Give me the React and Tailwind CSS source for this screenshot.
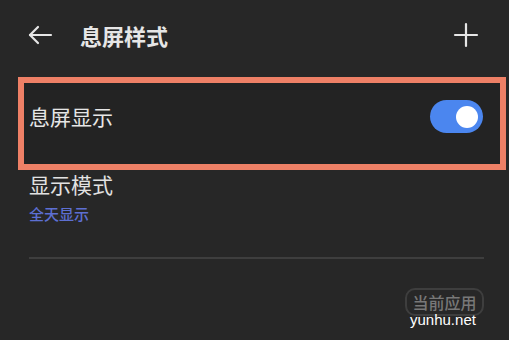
export default function App() {
  return (
    <div className="w-[509px] h-[340px] bg-[#272727] overflow-hidden relative" style={{ fontFamily: '"Noto Sans CJK SC", "Noto Sans", sans-serif' }}>
      <div className="h-[77px] flex items-center pl-[27px] pr-[30px] pb-[8px]">
        <svg width="26" height="22" viewBox="0 0 26 22" fill="none" stroke="#e6e6e6" strokeWidth="2.2" strokeLinecap="round" strokeLinejoin="round">
          <path d="M24 11H3" />
          <path d="M11 3L3 11L11 19" />
        </svg>
        <div className="ml-[27px] text-[22px] font-bold text-[#e6e6e6] leading-none">息屏样式</div>
        <div className="flex-1" />
        <svg width="26" height="26" viewBox="0 0 26 26" fill="none" stroke="#e6e6e6" strokeWidth="2.2" strokeLinecap="round">
          <path d="M13 2V24" />
          <path d="M2 13H24" />
        </svg>
      </div>
      <div className="ml-[18px] w-[488px] h-[93px] border-[6px] border-[#ee8066] bg-[#232323] flex items-center pl-[5px] pr-[17px] pb-[14px]">
        <div className="text-[21px] text-[#e6e6e6] leading-none">息屏显示</div>
        <div className="flex-1" />
        <div className="w-[53px] h-[33px] rounded-full bg-[#4b86ef] flex items-center justify-end pr-[5px]">
          <div className="w-[22px] h-[22px] rounded-full bg-white" />
        </div>
      </div>
      <div className="pl-[29px] pr-[25px]">
        <div className="mt-[4px] text-[21px] text-[#e2e2e2] leading-none">显示模式</div>
        <div className="mt-[11px] text-[15px] text-[#5d6fd2] leading-none font-medium">全天显示</div>
        <div className="mt-[36px] h-[2px] bg-[#3e3e3e]" />
        <div className="mt-[29px] flex justify-end">
          <div className="w-[79px] h-[28px] rounded-[10px] border-[2px] border-[#3e3e3e] flex items-center justify-center text-[16px] font-medium text-[#787878] leading-none">当前应用</div>
        </div>
      </div>
      <div className="absolute left-[410px] top-[312px] text-[15px] text-white leading-none" style={{ fontFamily: '"Liberation Sans", sans-serif' }}>yunhu.net</div>
    </div>
  );
}
